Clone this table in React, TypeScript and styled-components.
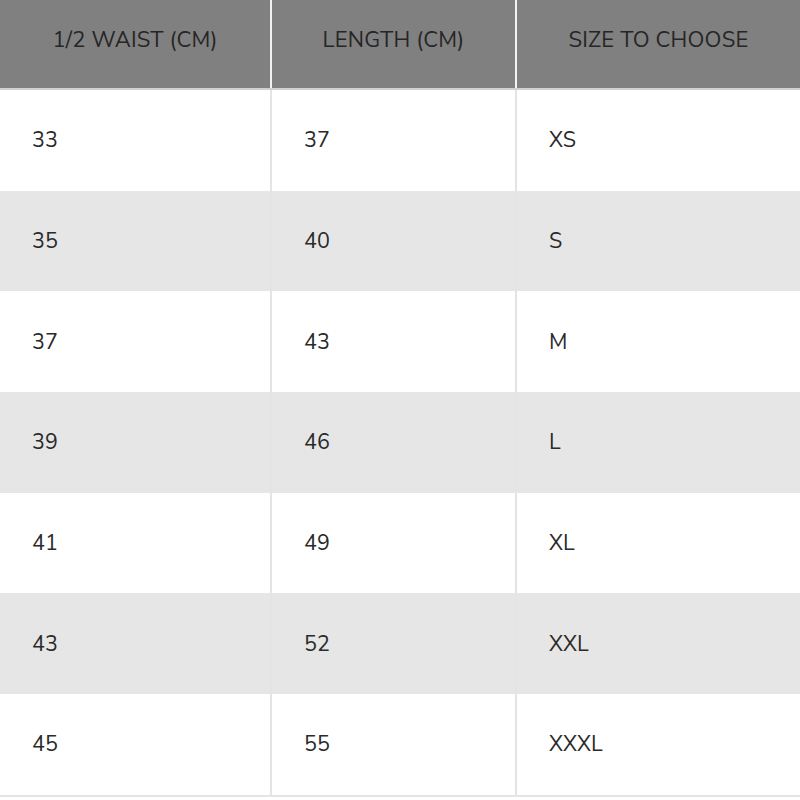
import React from "react";
import styled, { createGlobalStyle } from "styled-components";

const GlobalStyle = createGlobalStyle`
  body {
    margin: 0;
    background: #fff;
    font-family: "Nunito Sans", "Open Sans", "Noto Sans", sans-serif;
  }
`;

const STable = styled.table`
  width: 800px;
  border-collapse: collapse;
  table-layout: fixed;
`;

const SCol = styled.col<{ $width: number }>`
  width: ${(props) => props.$width}px;
`;

const SHeaderCell = styled.th`
  height: 79px;
  padding: 0 0 9px 0;
  background: #808080;
  color: #262626;
  font-weight: 400;
  font-size: 22px;
  letter-spacing: 0.2px;
  text-align: center;
  border-left: 2px solid #f2f2f2;
  border-bottom: 2px solid #d0d0d0;
  &:first-child {
    border-left: none;
  }
`;

const SRow = styled.tr<{ $striped?: boolean; $last?: boolean }>`
  background: ${(props) => (props.$striped ? "#e6e6e6" : "#fff")};
  ${(props) =>
    props.$last &&
    `
    border-bottom: 2px solid #e4e4e4;
  `}
`;

const SCell = styled.td`
  height: 100.7px;
  padding: 0 0 0 32px;
  font-size: 21.5px;
  color: #2a2a2a;
  border-left: 2px solid #e4e4e4;
  &:first-child {
    border-left: none;
  }
`;

const columns = [
  { title: "1/2 WAIST (CM)", width: 271 },
  { title: "LENGTH (CM)", width: 245 },
  { title: "SIZE TO CHOOSE", width: 284 },
];

const rows = [
  ["33", "37", "XS"],
  ["35", "40", "S"],
  ["37", "43", "M"],
  ["39", "46", "L"],
  ["41", "49", "XL"],
  ["43", "52", "XXL"],
  ["45", "55", "XXXL"],
];

export default function App() {
  return (
    <>
      <GlobalStyle />
      <STable>
        <colgroup>
          {columns.map((c) => (
            <SCol key={c.title} $width={c.width} />
          ))}
        </colgroup>
        <thead>
          <tr>
            {columns.map((c) => (
              <SHeaderCell key={c.title}>{c.title}</SHeaderCell>
            ))}
          </tr>
        </thead>
        <tbody>
          {rows.map((r, i) => (
            <SRow key={i} $striped={i % 2 === 1} $last={i === rows.length - 1}>
              {r.map((c, j) => (
                <SCell key={j}>{c}</SCell>
              ))}
            </SRow>
          ))}
        </tbody>
      </STable>
    </>
  );
}
